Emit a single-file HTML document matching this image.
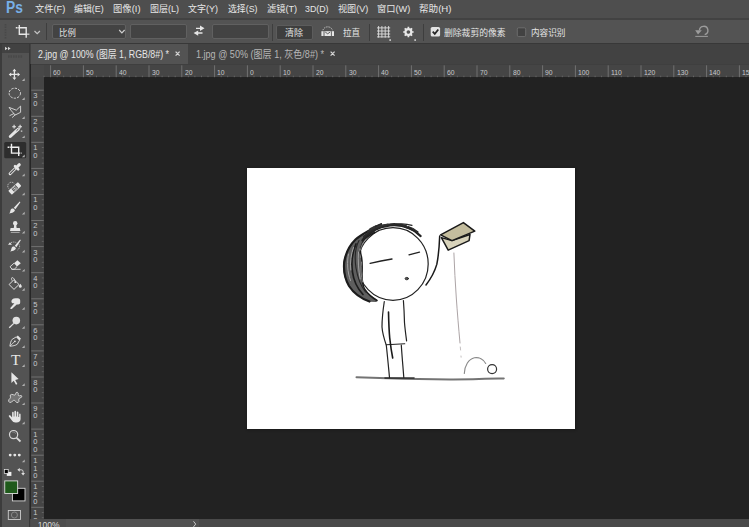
<!DOCTYPE html>
<html><head><meta charset="utf-8"><title>Ps</title>
<style>
*{margin:0;padding:0;box-sizing:border-box}
html,body{width:749px;height:527px;overflow:hidden;background:#262626;font-family:"Liberation Sans","Noto Sans CJK SC",sans-serif;}
#app{position:relative;width:749px;height:527px;overflow:hidden;background:#262626}
.abs{position:absolute}
#menubar{left:0;top:0;width:749px;height:18px;background:#4e4e4e}
#menubar .ps{position:absolute;left:5.8px;top:-1.2px;font-size:16px;font-weight:bold;color:#78b0e8;line-height:18px;transform:scaleX(0.86);transform-origin:0 0}
.mi{position:absolute;top:1.5px;font-size:9.5px;color:#e6e6e6;white-space:nowrap;line-height:14px;transform-origin:0 0}
#sep1{left:0;top:17.8px;width:749px;height:2px;background:#424242}
#opts{left:0;top:20px;width:749px;height:23px;background:#535353}
#sep2{left:0;top:43px;width:749px;height:1px;background:#383838}
.fld{position:absolute;top:24px;height:14.5px;background:#434343;border:1px solid #606060;border-radius:2px}
.ot{position:absolute;font-size:8.8px;color:#e4e4e4;white-space:nowrap;line-height:14px;top:26px;transform-origin:0 0}
.vsep{position:absolute;top:24px;width:1px;height:16.5px;background:#3e3e3e}
#tabs{left:30px;top:44px;width:719px;height:20px;background:#424242}
#tab1{left:1px;top:0;width:157px;height:21px;background:#535353}
.tabt{position:absolute;top:3.6px;font-size:10.2px;color:#e6e6e6;white-space:nowrap;line-height:14px;transform-origin:0 0}
#toolbar{left:0;top:44px;width:30px;height:483px;background:#535353;border-right:1px solid #383838;border-left:2px solid #3c3c3c}
#tbhead{left:0;top:0;width:27px;height:9px;background:#424242}
#hruler{left:31px;top:64px;width:718px;height:13.2px;background:#454545;overflow:hidden;border-top:1px solid #3f3f3f}
#vruler{left:31px;top:77px;width:12.7px;height:442px;background:#454545;overflow:hidden}
#corner{left:31px;top:65px;width:12.7px;height:12.2px;background:#484848}
.rl{position:absolute;font-size:7.9px;color:#c6c8cc;line-height:8px;white-space:nowrap;transform:scaleX(0.86);transform-origin:0 0}
.vl{position:absolute;font-size:7.5px;color:#c6c8cc;line-height:7.4px;width:7px;text-align:center;left:1.9px;word-break:break-all}
#canvas{left:43px;top:77px;width:706px;height:442px;background:#222222}
#img{left:246.8px;top:167.8px;width:328.3px;height:260.8px;background:#fff;box-shadow:0 0.5px 2px 0.5px #1a1a1a}
#status{left:30px;top:518.8px;width:719px;height:9px;background:#494949}
#st1{left:1px;top:0;width:35px;height:9px;background:#4d4d4d}
#st2{left:36px;top:0;width:133px;height:9px;background:#515151}
#zoomt{left:7.8px;top:1px;font-size:8.5px;color:#dcdcdc;line-height:10px}
svg{position:absolute;left:0;top:0}
</style></head><body>
<div id="app">
<div id="canvas" class="abs"></div>
<div id="img" class="abs"></div>
<div id="menubar" class="abs"><span class="ps">Ps</span>
<span class="mi" style="left:35px;transform:scaleX(0.9730)">文件(F)</span>
<span class="mi" style="left:74.2px;transform:scaleX(0.9346)">编辑(E)</span>
<span class="mi" style="left:113px;transform:scaleX(0.9832)">图像(I)</span>
<span class="mi" style="left:149.5px;transform:scaleX(0.9469)">图层(L)</span>
<span class="mi" style="left:188.2px;transform:scaleX(0.9472)">文字(Y)</span>
<span class="mi" style="left:228px;transform:scaleX(0.9314)">选择(S)</span>
<span class="mi" style="left:266.5px;transform:scaleX(0.9698)">滤镜(T)</span>
<span class="mi" style="left:305.3px;transform:scaleX(0.9273)">3D(D)</span>
<span class="mi" style="left:337.7px;transform:scaleX(0.9567)">视图(V)</span>
<span class="mi" style="left:377px;transform:scaleX(0.9709)">窗口(W)</span>
<span class="mi" style="left:419.3px;transform:scaleX(1.0092)">帮助(H)</span>
</div>
<div id="sep1" class="abs"></div><div id="opts" class="abs"></div><div id="sep2" class="abs"></div>
<div class="vsep" style="left:46px;top:23px"></div>
<div class="fld" style="left:52px;width:74px"></div><span class="ot" style="left:58.7px;transform:scaleX(0.9540)">比例</span>
<div class="fld" style="left:130px;width:57px"></div>
<div class="fld" style="left:212px;width:57px"></div>
<div class="fld" style="left:276px;width:37px;top:25px;height:15px;background:#3e3e3e;border-color:#5c5c5c"></div><span class="ot" style="left:285px;transform:scaleX(1.0222)">清除</span>
<span class="ot" style="left:343px;transform:scaleX(0.9654)">拉直</span>
<div class="vsep" style="left:369px"></div><div class="vsep" style="left:423px"></div>
<span class="ot" style="left:444.4px;transform:scaleX(1.0001)">删除裁剪的像素</span>
<span class="ot" style="left:530.7px;transform:scaleX(0.9800)">内容识别</span>
<div id="tabs" class="abs"><div id="tab1" class="abs"></div>
<span class="tabt" style="left:8.3px;transform:scaleX(0.8656)">2.jpg @ 100% (图层 1, RGB/8#) *</span>
<span class="tabt" style="left:166.3px;color:#b6b6b6;transform:scaleX(0.8891)">1.jpg @ 50% (图层 1, 灰色/8#) *</span>
</div>
<div id="hruler" class="abs">
<span class="rl" style="left:22.4px;top:4px">60</span>
<span class="rl" style="left:55.2px;top:4px">50</span>
<span class="rl" style="left:88.0px;top:4px">40</span>
<span class="rl" style="left:120.8px;top:4px">30</span>
<span class="rl" style="left:153.6px;top:4px">20</span>
<span class="rl" style="left:186.4px;top:4px">10</span>
<span class="rl" style="left:219.2px;top:4px">0</span>
<span class="rl" style="left:252.0px;top:4px">10</span>
<span class="rl" style="left:284.8px;top:4px">20</span>
<span class="rl" style="left:317.6px;top:4px">30</span>
<span class="rl" style="left:350.4px;top:4px">40</span>
<span class="rl" style="left:383.2px;top:4px">50</span>
<span class="rl" style="left:416.0px;top:4px">60</span>
<span class="rl" style="left:448.8px;top:4px">70</span>
<span class="rl" style="left:481.6px;top:4px">80</span>
<span class="rl" style="left:514.4px;top:4px">90</span>
<span class="rl" style="left:547.2px;top:4px">100</span>
<span class="rl" style="left:580.0px;top:4px">110</span>
<span class="rl" style="left:612.8px;top:4px">120</span>
<span class="rl" style="left:645.6px;top:4px">130</span>
<span class="rl" style="left:678.4px;top:4px">140</span>
<span class="rl" style="left:711.2px;top:4px">150</span>
</div>
<div id="vruler" class="abs">
<span class="vl" style="left:0.9px;top:15.1px">30</span>
<span class="vl" style="left:0.9px;top:41.2px">20</span>
<span class="vl" style="left:0.9px;top:67.2px">10</span>
<span class="vl" style="left:0.9px;top:93.3px">0</span>
<span class="vl" style="left:0.9px;top:119.4px">10</span>
<span class="vl" style="left:0.9px;top:145.4px">20</span>
<span class="vl" style="left:0.9px;top:171.5px">30</span>
<span class="vl" style="left:0.9px;top:197.6px">40</span>
<span class="vl" style="left:0.9px;top:223.7px">50</span>
<span class="vl" style="left:0.9px;top:249.7px">60</span>
<span class="vl" style="left:0.9px;top:275.8px">70</span>
<span class="vl" style="left:0.9px;top:301.9px">80</span>
<span class="vl" style="left:0.9px;top:327.9px">90</span>
<span class="vl" style="left:0.9px;top:354.0px">100</span>
<span class="vl" style="left:0.9px;top:380.1px">110</span>
<span class="vl" style="left:0.9px;top:406.1px">120</span>
<span class="vl" style="left:0.9px;top:432.2px">130</span>
</div>
<div id="corner" class="abs"></div>
<div id="toolbar" class="abs"><div id="tbhead" class="abs"></div></div>
<div id="status" class="abs"><div id="st1" class="abs"></div><div id="st2" class="abs"></div><span id="zoomt" class="abs">100%</span></div>
<svg width="749" height="527" viewBox="0 0 749 527">
<path d="M50.6 65.3V77.2M83.4 65.3V77.2M116.2 65.3V77.2M149.0 65.3V77.2M181.8 65.3V77.2M214.6 65.3V77.2M247.4 65.3V77.2M280.2 65.3V77.2M313.0 65.3V77.2M345.8 65.3V77.2M378.6 65.3V77.2M411.4 65.3V77.2M444.2 65.3V77.2M477.0 65.3V77.2M509.8 65.3V77.2M542.6 65.3V77.2M575.4 65.3V77.2M608.2 65.3V77.2M641.0 65.3V77.2M673.8 65.3V77.2M706.6 65.3V77.2M739.4 65.3V77.2" stroke="#7c7c7c" stroke-width="0.8" fill="none"/>
<path d="M44.0 75.7V77.2M57.2 75.7V77.2M63.7 75.7V77.2M70.3 75.7V77.2M76.8 75.7V77.2M90.0 75.7V77.2M96.5 75.7V77.2M103.1 75.7V77.2M109.6 75.7V77.2M122.8 75.7V77.2M129.3 75.7V77.2M135.9 75.7V77.2M142.4 75.7V77.2M155.6 75.7V77.2M162.1 75.7V77.2M168.7 75.7V77.2M175.2 75.7V77.2M188.4 75.7V77.2M194.9 75.7V77.2M201.5 75.7V77.2M208.0 75.7V77.2M221.2 75.7V77.2M227.7 75.7V77.2M234.3 75.7V77.2M240.8 75.7V77.2M254.0 75.7V77.2M260.5 75.7V77.2M267.1 75.7V77.2M273.6 75.7V77.2M286.8 75.7V77.2M293.3 75.7V77.2M299.9 75.7V77.2M306.4 75.7V77.2M319.6 75.7V77.2M326.1 75.7V77.2M332.7 75.7V77.2M339.2 75.7V77.2M352.4 75.7V77.2M358.9 75.7V77.2M365.5 75.7V77.2M372.0 75.7V77.2M385.2 75.7V77.2M391.7 75.7V77.2M398.3 75.7V77.2M404.8 75.7V77.2M418.0 75.7V77.2M424.5 75.7V77.2M431.1 75.7V77.2M437.6 75.7V77.2M450.8 75.7V77.2M457.3 75.7V77.2M463.9 75.7V77.2M470.4 75.7V77.2M483.6 75.7V77.2M490.1 75.7V77.2M496.7 75.7V77.2M503.2 75.7V77.2M516.4 75.7V77.2M522.9 75.7V77.2M529.5 75.7V77.2M536.0 75.7V77.2M549.2 75.7V77.2M555.7 75.7V77.2M562.3 75.7V77.2M568.8 75.7V77.2M582.0 75.7V77.2M588.5 75.7V77.2M595.1 75.7V77.2M601.6 75.7V77.2M614.8 75.7V77.2M621.3 75.7V77.2M627.9 75.7V77.2M634.4 75.7V77.2M647.6 75.7V77.2M654.1 75.7V77.2M660.7 75.7V77.2M667.2 75.7V77.2M680.4 75.7V77.2M686.9 75.7V77.2M693.5 75.7V77.2M700.0 75.7V77.2M713.2 75.7V77.2M719.7 75.7V77.2M726.3 75.7V77.2M732.8 75.7V77.2M746.0 75.7V77.2M752.5 75.7V77.2M759.1 75.7V77.2M765.6 75.7V77.2" stroke="#6c6c6c" stroke-width="0.8" fill="none"/>
<path d="M31.3 90.2H43.7M31.3 116.3H43.7M31.3 142.3H43.7M31.3 168.4H43.7M31.3 194.5H43.7M31.3 220.5H43.7M31.3 246.6H43.7M31.3 272.7H43.7M31.3 298.8H43.7M31.3 324.8H43.7M31.3 350.9H43.7M31.3 377.0H43.7M31.3 403.0H43.7M31.3 429.1H43.7M31.3 455.2H43.7M31.3 481.2H43.7M31.3 507.3H43.7" stroke="#7c7c7c" stroke-width="0.8" fill="none"/>
<path d="M41.8 95.4H43.7M41.8 100.6H43.7M41.8 105.8H43.7M41.8 111.0H43.7M41.8 121.5H43.7M41.8 126.7H43.7M41.8 131.9H43.7M41.8 137.1H43.7M41.8 147.5H43.7M41.8 152.8H43.7M41.8 158.0H43.7M41.8 163.2H43.7M41.8 173.6H43.7M41.8 178.8H43.7M41.8 184.0H43.7M41.8 189.3H43.7M41.8 199.7H43.7M41.8 204.9H43.7M41.8 210.1H43.7M41.8 215.3H43.7M41.8 225.8H43.7M41.8 231.0H43.7M41.8 236.2H43.7M41.8 241.4H43.7M41.8 251.8H43.7M41.8 257.0H43.7M41.8 262.3H43.7M41.8 267.5H43.7M41.8 277.9H43.7M41.8 283.1H43.7M41.8 288.3H43.7M41.8 293.5H43.7M41.8 304.0H43.7M41.8 309.2H43.7M41.8 314.4H43.7M41.8 319.6H43.7M41.8 330.0H43.7M41.8 335.2H43.7M41.8 340.5H43.7M41.8 345.7H43.7M41.8 356.1H43.7M41.8 361.3H43.7M41.8 366.5H43.7M41.8 371.7H43.7M41.8 382.2H43.7M41.8 387.4H43.7M41.8 392.6H43.7M41.8 397.8H43.7M41.8 408.2H43.7M41.8 413.5H43.7M41.8 418.7H43.7M41.8 423.9H43.7M41.8 434.3H43.7M41.8 439.5H43.7M41.8 444.7H43.7M41.8 450.0H43.7M41.8 460.4H43.7M41.8 465.6H43.7M41.8 470.8H43.7M41.8 476.0H43.7M41.8 486.5H43.7M41.8 491.7H43.7M41.8 496.9H43.7M41.8 502.1H43.7M41.8 512.5H43.7M41.8 517.7H43.7" stroke="#6c6c6c" stroke-width="0.8" fill="none"/>
<!-- options bar icons -->
<g id="opt-icons">
<path d="M5.5 24v15" stroke="#484848" stroke-width="1.6" stroke-dasharray="1.4 1.2" fill="none"/>
<path d="M15.800 27.750H26.200V37.700M19.300 25V34.250H29.300" stroke="#e8e8e8" stroke-width="1.350" fill="none"/><path d="M17.800 26.800v2M28 33.300v2" stroke="#535353" stroke-width="0.600" fill="none"/>
<path d="M34.5 31l2.7 2.7 2.7-2.7" stroke="#c4c4c4" stroke-width="1.2" fill="none"/>
<path d="M119.2 30l2.7 2.8 2.7-2.8" stroke="#d0d0d0" stroke-width="1.2" fill="none"/>
<path d="M196 28.3h4.5M198 33h4.5" stroke="#e6e6e6" stroke-width="1.3" fill="none"/>
<path d="M200 25.6l4.5 2.7-4.5 2.7zM198.2 30.4l-4.6 2.6 4.6 2.7z" fill="#e6e6e6"/>
<path d="M272.5 24v17" stroke="#3e3e3e" stroke-width="1" fill="none"/>
<!-- straighten -->
<rect x="321.4" y="31.2" width="12.6" height="4.8" fill="#e6e6e6"/>
<path d="M324 31.2v4.8M331.4 31.2v4.8" stroke="#535353" stroke-width="0.9"/>
<path d="M325.2 32l2.5 1.8 2.5-1.8" stroke="#535353" stroke-width="0.9" fill="none"/>
<path d="M323 30.2a4.8 4.2 0 0 1 9.4 0" stroke="#d8d8d8" stroke-width="0.9" stroke-dasharray="1.3 1" fill="none"/>
<!-- grid -->
<path d="M378.6 26v11.6M381.9 26v11.6M385.2 26v11.6M388.6 26v11.6M377 27.9h13.2M377 31h13.2M377 34h13.2M377 36.9h13.2" stroke="#e0e0e0" stroke-width="0.9" fill="none"/>
<rect x="389.4" y="39.3" width="1.5" height="1.5" fill="#e8e8e8"/>
<!-- gear -->
<g transform="translate(408.4 32)">
<circle r="2.9" fill="none" stroke="#e8e8e8" stroke-width="2.2"/>
<g stroke="#e8e8e8" stroke-width="1.7">
<path d="M0-5.2V-3.4M0 5.2V3.4M-5.2 0H-3.4M5.2 0H3.4M-3.7-3.7l1.3 1.3M3.7 3.7l-1.3-1.3M-3.7 3.7l1.3-1.3M3.7-3.7l-1.3 1.3"/>
</g><!-- status chevron --><path d="M193.500 521.300l2.200 2.800-2.200 2.800" stroke="#c8c8c8" stroke-width="1" fill="none"/>
</g>
<rect x="414.4" y="39.3" width="1.5" height="1.5" fill="#e8e8e8"/>
<!-- checkboxes -->
<rect x="430.700" y="26.900" width="9.400" height="9.700" rx="1.600" fill="#e2e2e2"/>
<path d="M432.700 31.600l2.100 2.300 3.500-4.400" stroke="#262626" stroke-width="1.700" fill="none"/>
<rect x="517.3" y="27.8" width="8.4" height="8.8" rx="1.4" fill="#424242" stroke="#707070" stroke-width="0.9"/>
<!-- reset -->
<path d="M699.5 30.2a4.2 4.2 0 1 1 5.2 4.4" stroke="#9c9c9c" stroke-width="1.4" fill="none"/>
<path d="M695.200 30.300h6.600l-3.800 4.200z" fill="#9c9c9c"/>
<path d="M695.3 36.4h12.6" stroke="#9c9c9c" stroke-width="1" fill="none"/>
<!-- tab close -->
<path d="M175.6 51.6l4 4M179.6 51.6l-4 4M330.6 51.6l4 4M334.6 51.6l-4 4" stroke="#d4d4d4" stroke-width="1.3" fill="none"/>
<!-- status chevron --><path d="M193.500 521.300l2.200 2.800-2.200 2.800" stroke="#c8c8c8" stroke-width="1" fill="none"/>
</g>

<!-- toolbar icons -->
<g id="tool-icons">
<path d="M5 46.8l2.6 1.7L5 50.2zM8 46.8l2.6 1.7L8 50.2z" fill="#d4d4d4"/>
<path d="M8 56.5h15" stroke="#494949" stroke-width="2.6" stroke-dasharray="1.6 0.9" fill="none"/>
<!-- move -->
<g transform="translate(14.4 74.4)" fill="#e6e6e6">
<path d="M0-3.400V3.400M-3.400 0H3.400" stroke="#e6e6e6" stroke-width="1.300" fill="none"/>
<path d="M0-5.700l2 2.500h-4zM0 5.700l2-2.500h-4zM-5.700 0l2.500-2v4zM5.700 0l-2.500-2v4z"/>
</g>
<!-- ellipse marquee -->
<ellipse cx="14.8" cy="93.2" rx="5.7" ry="5" fill="none" stroke="#dcdcdc" stroke-width="1" stroke-dasharray="2.3 1.2"/>
<!-- polygon lasso -->
<path d="M9.1 107.4l7.2 2.8 4.3-4.1v6.2l-5.4 2.7-3.8-4.2zM9.5 115.7l4.5-2.2M12.1 117.6l3.4-3" fill="none" stroke="#dcdcdc" stroke-width="0.9"/>
<!-- magic wand -->
<path d="M10.300 136.500L16 131.200" stroke="#e6e6e6" stroke-width="3" stroke-linecap="round" fill="none"/>
<path d="M16.400 130.900l2-1.800" stroke="#e6e6e6" stroke-width="3" stroke-linecap="round" fill="none"/>
<path d="M16.800 130.500l1.400-1.300" stroke="#535353" stroke-width="1" stroke-linecap="round" fill="none"/>
<path d="M14.100 124.800v3.800M12.200 126.700h3.800M20.100 124.800v3.800M18.200 126.700h3.800" stroke="#e6e6e6" stroke-width="1.100" fill="none"/>
<rect x="20.800" y="130.400" width="1.500" height="1.500" fill="#bdbdbd"/>
<!-- crop selected -->
<rect x="4.2" y="142" width="22" height="16.3" rx="1.5" fill="#2d2d2d"/>
<path d="M7.600 147.200H18.700V156M11.500 143.800V153.100H21.600" stroke="#efefef" stroke-width="1.400" fill="none"/><path d="M9.700 146.200v2M20.500 152.100v2" stroke="#2d2d2d" stroke-width="0.700" fill="none"/>
<!-- eyedropper -->
<path d="M10.1 173.7l5.2-5.2" stroke="#e6e6e6" stroke-width="3" stroke-linecap="round" fill="none"/>
<path d="M10.3 173.5l4.6-4.6" stroke="#535353" stroke-width="1.1" stroke-linecap="round" fill="none"/>
<path d="M16.6 167.3l2.7-2.6" stroke="#e6e6e6" stroke-width="3" stroke-linecap="round" fill="none"/>
<path d="M15 166.2l3.2 3.2" stroke="#e6e6e6" stroke-width="2.6" stroke-linecap="round" fill="none"/>
<!-- healing -->
<g transform="translate(14.800 188.400) rotate(-42.500)">
<rect x="-6.600" y="-2.600" width="13.200" height="5.200" rx="0.900" fill="#e6e6e6"/>
<rect x="-2.800" y="-2" width="5.600" height="4" fill="#535353"/>
<rect x="-1.500" y="-1.500" width="3" height="3" fill="none" stroke="#dcdcdc" stroke-width="0.700"/>
<circle r="0.700" fill="#e6e6e6"/>
</g>
<path d="M8.800 188.600a3.600 3.600 0 0 1 5.400-5.200" stroke="#d4d4d4" stroke-width="0.800" stroke-dasharray="1.100 0.700" fill="none"/>
<!-- brush -->
<path d="M20.4 202.2l-5 7-1.6-1.4 5.9-6.2z" fill="#e6e6e6"/>
<path d="M13.3 208.6l1.5 1.5c0.3 1.8-2.5 3.2-5.8 3.5c1.5-1 1-2.4 1.6-3.6c0.6-1.2 1.7-1.6 2.7-1.4z" fill="#e6e6e6"/>
<!-- stamp -->
<circle cx="15.2" cy="223.2" r="2.2" fill="#e6e6e6"/>
<path d="M14.2 224.5h2l0.4 3.6h3.2l0.6 2.9H10l0.6-2.9h3.2z" fill="#e6e6e6"/>
<path d="M10.8 232.4h8.8" stroke="#b8b8b8" stroke-width="0.9" fill="none"/>
<!-- history brush -->
<path d="M20.8 240.2l-4.4 7-1.6-1.4 5.3-6.2z" fill="#e6e6e6"/>
<path d="M14.3 246.6l1.5 1.5c0.3 1.8-2.5 3.2-5.8 3.5c1.5-1 1-2.4 1.6-3.6c0.6-1.2 1.7-1.6 2.7-1.4z" fill="#e6e6e6"/>
<path d="M8 244.7h3.9l-1.9-2.5z" fill="#e6e6e6"/>
<path d="M11 242.6c2-0.9 4.4-0.7 5.6 0.3M19 244.4c1.2 1.8 0.6 4.2-1.4 5.6" stroke="#cfcfcf" stroke-width="0.8" stroke-dasharray="1 0.8" fill="none"/>
<!-- eraser -->
<path d="M14 263.2l3.4-3 3.4 3-3.8 3.4z" fill="#e6e6e6"/>
<path d="M14 263.2l-4 3.6 2.2 2.5h2l2.8-2.7M11.4 269.3h9.2" stroke="#e0e0e0" stroke-width="0.9" fill="none"/>
<!-- bucket -->
<path d="M9.1 284.5l4.9-4.9 5 4.9-5 4.9z" fill="none" stroke="#e0e0e0" stroke-width="1"/>
<path d="M15.3 282c-0.5-2.5-1.8-4.4-3-4.4c-1.1 0-1 1.6-0.2 3" fill="none" stroke="#e0e0e0" stroke-width="0.9"/>
<circle cx="15.3" cy="282.2" r="0.9" fill="#e6e6e6"/>
<path d="M20.3 283.8c0.9 1.2 1.4 1.9 1.4 2.6a1.4 1.4 0 0 1-2.8 0c0-0.7 0.5-1.4 1.4-2.6z" fill="#e6e6e6"/>
<!-- smudge -->
<path d="M11.4 301.5c0-2 1.5-3.3 4-3.3h2.4c1.6 0 2.4 0.9 2.4 2.4v2c0 1.2-0.8 2-2 2l-1.5-0.2-4.6 4.4c-1 0.9-2.5-0.3-1.4-1.4l3.7-4.2c-1.8 0.5-3-0.3-3-1.7z" fill="#e6e6e6"/>
<!-- dodge -->
<circle cx="16.3" cy="320.6" r="3.8" fill="#e0e0e0"/>
<path d="M13.8 323.4l-4.6 4.4" stroke="#e0e0e0" stroke-width="1.3" fill="none"/>
<!-- pen -->
<path d="M9.9 346.2c0.4-3 1-5.3 2.4-7l4-2.3 3.3 3.3-2.3 4c-1.8 1.3-4.3 1.8-7.4 2z" fill="none" stroke="#e0e0e0" stroke-width="0.9"/>
<path d="M16.3 336.9l1.5-1.3 3.2 3.2-1.4 1.5z" fill="#e6e6e6"/>
<path d="M10 346l4.6-4.4" stroke="#e0e0e0" stroke-width="0.8" fill="none"/>
<circle cx="14.9" cy="341.3" r="0.9" fill="#e6e6e6"/>
<!-- T -->
<text x="15.65" y="365" font-family="Liberation Serif, serif" font-size="15.4" text-anchor="middle" fill="#e6e6e6">T</text>
<!-- path select arrow -->
<path d="M11.4 372.3v10.6l2.3-2.2 2.3 4 1.4-0.8-2.2-4 3.4-0.9z" fill="#e6e6e6"/>
<!-- custom shape -->
<path d="M8.600 401.200Q8.400 399.600 10.200 398.200Q11 397.200 10.200 396Q10 394.600 11.600 394.400Q13.200 394.400 14.200 395.200Q15.200 395.400 15.600 393.800Q16 392 17.400 392.300Q18.600 392.800 18.200 394.600Q18 396 19.400 395.800Q21.600 395 21.900 396.200Q22 397.400 20 398Q18.400 398.600 18.800 400Q19.400 402 18 402.600Q16.400 403 15.600 401.400Q14.800 399.800 13.400 400.400Q12.400 401 11.400 402.200Q9.400 403.200 8.600 401.200Z" fill="#747474" stroke="#dadada" stroke-width="0.900"/>
<!-- hand -->
<path d="M12.1 417.500v-4.800c0-1.200 1.600-1.200 1.600 0v3.800h0.700v-4.800c0-1.200 1.700-1.200 1.700 0v4.800h0.700v-4.200c0-1.200 1.600-1.200 1.600 0v4.800h0.700v-2.600c0-1.200 1.500-1.200 1.500 0v4.500c0 2.200-1.600 3.500-4 3.500h-1.200c-1.700 0-2.600-0.700-3.500-2l-3-4c-0.500-1 0.600-1.700 1.500-1z" fill="#e6e6e6"/>
<!-- zoom -->
<circle cx="13.6" cy="434.600" r="4.100" fill="none" stroke="#d8d8d8" stroke-width="1.200"/>
<path d="M16.600 437.800l3.900 3.700" stroke="#d8d8d8" stroke-width="1.800" fill="none"/>
<path d="M12.400 432.200c1.400-0.500 2.800 0.200 3.400 1.500" stroke="#a0a0a0" stroke-width="0.700" fill="none"/>
<!-- dots -->
<circle cx="10.200" cy="455.100" r="1.450" fill="#e6e6e6"/><circle cx="14.800" cy="455.100" r="1.450" fill="#e6e6e6"/><circle cx="19.300" cy="455.100" r="1.450" fill="#e6e6e6"/>
<!-- default colours / swap -->
<rect x="6.800" y="471.900" width="4.600" height="4" fill="#f0f0f0"/>
<rect x="4.300" y="469.400" width="3.900" height="4" fill="#000" stroke="#f0f0f0" stroke-width="0.700"/>
<path d="M19.500 469.800h1.800a1.800 1.800 0 0 1 1.800 1.800v1.800" stroke="#d8d8d8" stroke-width="1" fill="none"/>
<path d="M19.800 467.900v3.800l-2.500-1.900zM21.200 473.100h3.800l-1.900 2.400z" fill="#e0e0e0"/>
<!-- fg/bg -->
<rect x="12.400" y="488.300" width="12.600" height="12.600" fill="#000" stroke="#d6d6d6" stroke-width="0.900"/>
<rect x="4.750" y="480.900" width="12.900" height="12.600" fill="#1f5a1b" stroke="#dcdcdc" stroke-width="0.900"/>
<!-- quick mask -->
<rect x="8.300" y="510.500" width="12.200" height="9" fill="none" stroke="#cccccc" stroke-width="0.900"/>
<circle cx="14.400" cy="515" r="3" fill="none" stroke="#8c8c8c" stroke-width="0.900"/>
<path d="M24.700 78.2v2.700h-2.800zM24.700 97.3v2.700h-2.800zM24.700 116.3v2.700h-2.800zM24.700 135.4v2.700h-2.800zM24.700 154.5v2.700h-2.800zM24.700 173.5v2.700h-2.800zM24.700 192.6v2.700h-2.800zM24.700 211.7v2.700h-2.800zM24.700 230.8v2.700h-2.800zM24.700 249.8v2.700h-2.800zM24.700 268.9v2.700h-2.800zM24.700 288.0v2.700h-2.800zM24.700 307.0v2.700h-2.800zM24.700 326.1v2.700h-2.800zM24.700 345.2v2.700h-2.800zM24.700 364.3v2.700h-2.800zM24.700 383.3v2.700h-2.800zM24.700 402.4v2.700h-2.800zM24.700 421.5v2.700h-2.800zM24.700 459.6v2.700h-2.800z" fill="#b2b2b2"/>
</g>

<!-- cartoon -->
<g id="cartoon" fill="none" stroke-linecap="round" stroke-linejoin="round">
<!-- ground -->
<path d="M356.500 377.300C380 378.200 420 379.200 450 379.400C470 379.500 490 378.800 503.800 378.400" stroke="#747474" stroke-width="2"/>
<path d="M385 378.100H414" stroke="#3a3a3a" stroke-width="1.600"/>
<!-- head -->
<ellipse cx="393" cy="264" rx="35.200" ry="36.300" fill="#ffffff" stroke="#222" stroke-width="1.200"/>
<!-- hair crescent -->
<path d="M378.200 224.800C374.500 227.500 371.500 230.200 368.800 232.500C364.500 234.500 360.500 236.300 356.800 238.500C353.500 241.500 350.500 245 348.300 248.800C345.800 253 344 257.500 343.100 262.400C342.800 267.500 343.300 272.800 344.800 277.800C346.500 283 349.500 287.500 353.400 291.500C357.800 296 363 299.500 368.800 301.800L376.500 302.100L377.300 300C372 296.800 367 292.800 363.600 288.100C362.400 283.500 362 279 361.900 274.400C362.200 270 362.200 265 361.900 260.700C360.500 257.500 359.600 254 359.400 250.500C360 246.800 361.500 243.300 363.600 240.200C366.500 237 370.500 234.500 374.800 232.500Z" fill="#5e5e5e" stroke="none"/>
<path d="M376 226.500C369 231 361 234.500 355.500 239.500C350 245 345.500 253 344.200 262.500C343.500 270 345 279 349 286C353.500 293 361 298.500 369.500 301.500" stroke="#1c1c1c" stroke-width="2.200"/>
<path d="M374.800 232.500C369 235 364.500 238.500 362 243.500C360 247.500 360 252 361.500 257C362.500 262 362.300 268 362 274.500C362 280 362.600 285 364.500 289C367.500 293.500 372 297.500 377 300.500" stroke="#1c1c1c" stroke-width="1.500"/>
<path d="M356 244C352.500 252 351 262 352.500 272C353.500 280 357 288 363 294.500" stroke="#1c1c1c" stroke-width="1.700"/>
<path d="M359 240.500C355 248 354.500 258 356 268C357.500 277 360 285 365.500 292" stroke="#262626" stroke-width="1.100"/>
<path d="M348.500 254C346.800 262 347.300 272 350.500 280.500M358.500 252C357.800 260 358.500 270 360.200 279M353.500 247.500C351 254 350 262 350.800 270" stroke="#a4a4a4" stroke-width="1"/>
<path d="M361.500 262C360.500 268 361 276 362.500 282M366 239C363 242 361 246 360.500 250" stroke="#8a8a8a" stroke-width="0.900"/>
<!-- top hair -->
<path d="M362.500 240.500C368 232.500 378 226.800 390 225.300C402 224.300 413 228 420.500 236" stroke="#222" stroke-width="2.400"/>
<path d="M364 236.500C371 229.500 380 225.500 391 224.200C397 223.800 402 224.600 406 226" stroke="#2a2a2a" stroke-width="2"/>
<path d="M368 231.500C374 227.500 381 225 388 224.200M370 229C374 226.800 378 225.300 381.500 224.300" stroke="#333" stroke-width="1.500"/>
<path d="M396 224.400C401 223.500 407 223.900 412 225.400M405 227.300C410 228.800 415 231.300 418.800 234.400M375.500 226.800C377.500 225.300 379.500 224.300 381.500 223.500M408 226.500C412 227.500 415.500 229.500 418 232" stroke="#262626" stroke-width="1.200"/>
<!-- face -->
<path d="M370.100 263.400C377 261.600 385 260 392 259" stroke="#222" stroke-width="1.300"/>
<path d="M409 254.900C412.500 253.800 416 252.800 419.500 252.100" stroke="#222" stroke-width="1.300"/>
<ellipse cx="406.800" cy="278.600" rx="1.700" ry="1.200" fill="#555" stroke="#2a2a2a" stroke-width="0.900"/>
<!-- body -->
<path d="M384.300 301.500C383 310 382 319 382 327C382.500 334 384.500 340 386.300 345.200C387.500 356 388.500 367 389.500 377.500" stroke="#222" stroke-width="1.200"/>
<path d="M403.400 300.500C404 308 404.300 315 404.500 322.800C405 329 405.800 335 406.600 340.900" stroke="#222" stroke-width="1.200"/>
<path d="M386.300 344.800C392 344.300 398 343.900 404.800 343.700" stroke="#222" stroke-width="1.100"/>
<path d="M388.500 312.100C388.700 321 389 330 389.700 337.700C390.500 345 391.500 352 392.700 358" stroke="#1a1a1a" stroke-width="1.600"/>
<path d="M401.300 345.200C402 356 403 367 403.800 377.500" stroke="#222" stroke-width="1.200"/>
<!-- raised arm -->
<path d="M426 285C431 278.500 435 270.500 436.800 264.400C438.500 256 439.300 246 439.700 236" stroke="#1a1a1a" stroke-width="1.500"/>
<!-- wallet -->
<path d="M441.400 237.600L448.200 250.100L469.100 240.600L470 234.500L452 240.600Z" fill="#d8d3bb" stroke="#1a1a1a" stroke-width="1.500"/>
<path d="M440.600 234.900L463.400 222.600L474.800 231.100L452 240.600Z" fill="#c4bd9e" stroke="#1a1a1a" stroke-width="1.500"/>
<!-- falling trail -->
<path d="M453.900 253C454.500 268 455.200 283 456.300 298C457.300 312 458.600 328 460 343" stroke="#aca4a6" stroke-width="1"/>
<path d="M460.300 347l0.300 3M461 356l0.100 1.200" stroke="#b4aeb0" stroke-width="0.800"/>
<!-- arc + coin -->
<path d="M464.300 373.500C464.500 366 468.500 359 474.500 357.800C479 357 483.500 359.500 485.700 363.400" stroke="#888" stroke-width="1.100"/>
<circle cx="492.100" cy="369.100" r="4.500" stroke="#333" stroke-width="1.200"/>
</g>

</svg>
</div>
</body></html>
